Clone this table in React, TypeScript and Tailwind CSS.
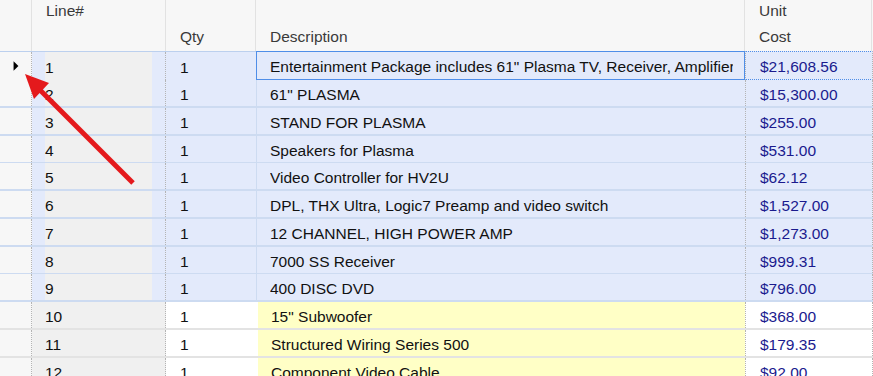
import React from "react";

type Row = { line: number; qty: number; desc: string; cost: string; h: number };

const rows: Row[] = [
  { line: 1, qty: 1, desc: 'Entertainment Package includes 61" Plasma TV, Receiver, Amplifier, Speakers', cost: "$21,608.56", h: 28 },
  { line: 2, qty: 1, desc: '61" PLASMA', cost: "$15,300.00", h: 28 },
  { line: 3, qty: 1, desc: "STAND FOR PLASMA", cost: "$255.00", h: 28 },
  { line: 4, qty: 1, desc: "Speakers for Plasma", cost: "$531.00", h: 27 },
  { line: 5, qty: 1, desc: "Video Controller for HV2U", cost: "$62.12", h: 28 },
  { line: 6, qty: 1, desc: "DPL, THX Ultra, Logic7 Preamp and video switch", cost: "$1,527.00", h: 28 },
  { line: 7, qty: 1, desc: "12 CHANNEL, HIGH POWER AMP", cost: "$1,273.00", h: 28 },
  { line: 8, qty: 1, desc: "7000 SS Receiver", cost: "$999.31", h: 27 },
  { line: 9, qty: 1, desc: "400 DISC DVD", cost: "$796.00", h: 28 },
  { line: 10, qty: 1, desc: '15" Subwoofer', cost: "$368.00", h: 28 },
  { line: 11, qty: 1, desc: "Structured Wiring Series 500", cost: "$179.35", h: 28 },
  { line: 12, qty: 1, desc: "Component Video Cable", cost: "$92.00", h: 28 },
];

function GridRow({ r }: { r: Row }) {
  const sel = r.line <= 9;
  const first = r.line === 1;
  const sep = sel ? "border-[#cddbf1]" : "border-[#e3e3e3]";
  const bg = sel ? "bg-[#e3eafb]" : "bg-white";
  return (
    <div
      className={`grid grid-cols-[32px_134px_90px_489px_128px] border-b-2 ${sep}`}
      style={{ height: r.h }}
    >
      <div className="bg-[#f7f7f7] border-r border-dotted border-[#b4b4b4] flex items-center">
        {first && (
          <svg width="32" height="28" viewBox="0 0 32 28" className="block">
            <polygon points="14,9 14,19 19,14" fill="#000" />
          </svg>
        )}
      </div>
      <div className={`${sel ? "bg-[#e3eafb] px-[13px]" : "bg-[#f0f0f0]"} border-r border-dotted border-[#b4b4b4] flex`}>
        <div className={`flex-1 bg-[#f0f0f0] flex items-center pt-[3px] ${sel ? "pl-0" : "pl-[13px]"} text-[#111]`}>
          {r.line}
        </div>
      </div>
      <div className={`${bg} flex items-center pt-[3px] pl-[14px] text-[#111]`}>{r.qty}</div>
      <div
        className={`${sel ? "bg-[#e3eafb]" : "bg-[#ffffc6] border-l-2 border-white"} ${
          first ? "border border-[#4f8ee8] -mt-px pt-[2px]" : sel ? "border-l border-[#cddbf1] pt-[3px]" : "pt-[3px]"
        } flex items-center pl-[13px] overflow-hidden whitespace-nowrap text-[#111]`}
      >
        <span className="overflow-hidden block w-[463px]">{r.desc}</span>
      </div>
      <div
        className={`${bg} ${first ? "border-t border-b border-[#4f8ee8] -mt-px pt-[2px]" : "pt-[3px]"} border-l border-dotted border-l-[#b4b4b4] border-r border-r-[#b4b4b4] flex items-center pl-[14px] text-[#1a1a8e]`}
      >
        {r.cost}
      </div>
    </div>
  );
}

export default function App() {
  return (
    <div className="relative w-[873px] h-[376px] overflow-hidden bg-white font-['Liberation_Sans',Arial,sans-serif] text-[15.5px]">
      <div className="grid grid-cols-[32px_134px_90px_489px_128px] h-[52px] bg-[#f7f7f7] border-b border-[#bcd0ee] text-[#3a3a3a] leading-[18px]">
        <div className="border-r border-[#e2e2e2]" />
        <div className="border-r border-[#e2e2e2] pl-[14px] pt-[2px]">Line#</div>
        <div className="border-r border-[#e2e2e2] flex flex-col justify-end pb-[5px] pl-[14px]">Qty</div>
        <div className="border-r border-[#e2e2e2] flex flex-col justify-end pb-[5px] pl-[14px]">Description</div>
        <div className="border-r border-[#e2e2e2] flex flex-col justify-between pt-[2px] pb-[5px] pl-[14px] mr-[1px]">
          <span>Unit</span>
          <span>Cost</span>
        </div>
      </div>
      {rows.map((r) => (
        <GridRow key={r.line} r={r} />
      ))}
      <svg className="absolute left-0 top-0 pointer-events-none" width="873" height="376">
        <line x1="133" y1="183" x2="40" y2="90" stroke="#e4191c" strokeWidth="5" />
        <polygon points="25,74 49,83 34,99" fill="#e4191c" />
      </svg>
    </div>
  );
}
